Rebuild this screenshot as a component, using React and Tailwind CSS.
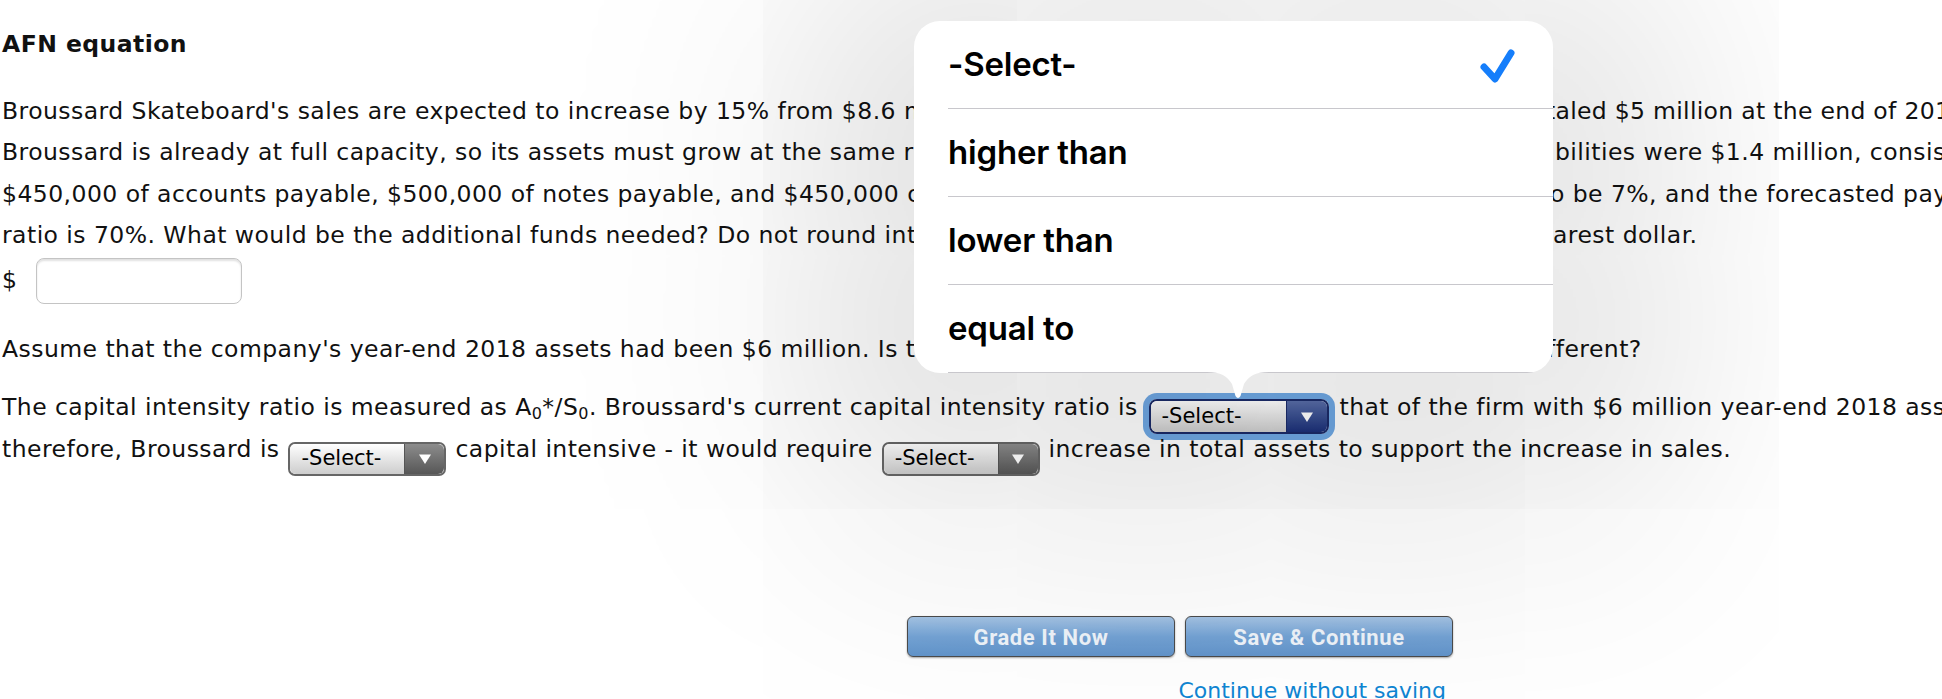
import React from 'react';

// lines of the problem text that run under the open picker and past the window
const problemLines = [
  {
    left: "Broussard Skateboard's sales are expected to increase by 15% from $8.6 million in 2018 to $9.89 million in 2019. Its assets to",
    right: 'taled $5 million at the end of 2018.',
    cell: 'w-[1544px]',
    pad: 'tracking-[0.3px]',
  },
  {
    left: 'Broussard is already at full capacity, so its assets must grow at the same rate as projected sales. At the end of 2018, current lia',
    right: 'bilities were $1.4 million, consisting of',
    cell: 'w-[1551px]',
    pad: 'pl-[2px]',
  },
  {
    left: '$450,000 of accounts payable, $500,000 of notes payable, and $450,000 of accrued liabilities. The after-tax profit margin is forecasted t',
    right: 'o be 7%, and the forecasted payout',
    cell: 'w-[1548px]',
    pad: '',
  },
  {
    left: 'ratio is 70%. What would be the additional funds needed? Do not round intermediate calculations. Round your answer to the ne',
    right: 'arest dollar.',
    cell: 'w-[1551px]',
    pad: '',
  },
];

const options = ['-Select-', 'higher than', 'lower than', 'equal to'];

const Triangle = () => (
  <svg width="14" height="12" viewBox="0 0 14 12">
    <path d="M1 1.5 H13 L7 11 Z" fill="#fff" />
  </svg>
);

// the styled dropdown used inside the sentences
const Picker = ({ focused }) => (
  <span
    className={
      focused
        ? 'mx-[3px] -my-[14px] inline-flex h-[35px] w-[180px] align-[-8px] rounded-[8px] border-2 border-[#1b2b69] tracking-normal ring-[6px] ring-[#6fa8e4]'
        : 'mx-[1px] -my-[14px] inline-flex h-[34px] w-[158px] align-[-8px] rounded-[7px] border-2 border-[#666] tracking-normal'
    }
  >
    <span className="flex flex-1 items-center rounded-l-[6px] bg-linear-to-b from-white to-[#cdcdcd] pl-[11px] text-[21px] leading-none text-black">
      -Select-
    </span>
    <span
      className={
        focused
          ? 'flex w-[41px] items-center justify-center rounded-r-[6px] border-l border-[#1b2b69] bg-linear-to-b from-[#5a6ea9] to-[#1c3079]'
          : 'flex w-[40px] items-center justify-center rounded-r-[6px] border-l border-[#555] bg-linear-to-b from-[#8d8d8d] to-[#575757]'
      }
    >
      <Triangle />
    </span>
  </span>
);

export default function App() {
  return (
    <div className="relative h-[699px] w-[1942px] overflow-hidden bg-white font-['DejaVu_Sans',Verdana,sans-serif] text-[23.5px] leading-[41.5px] tracking-[0.45px] text-[#111]">
      <div className="w-[2356px] pt-[24px] pl-[2px]">
        <h1 className="font-bold">AFN equation</h1>

        <div className="mt-[25px]">
          {problemLines.map((l, i) => (
            <div key={i} className="flex whitespace-nowrap">
              <div className={l.cell + ' shrink-0 overflow-hidden'}>{l.left}</div>
              <div className={l.pad}>{l.right}</div>
            </div>
          ))}
        </div>

        <div className="mt-[1px] flex h-[47px] items-center gap-[19px]">
          <span>$</span>
          <input
            type="text"
            className="h-[46px] w-[206px] rounded-[8px] border border-[#c4c4c4] bg-white shadow-[inset_0_2px_2px_rgba(0,0,0,0.12)] outline-none"
          />
        </div>

        <div className="mt-[24px] flex whitespace-nowrap">
          <div className="w-[1545px] shrink-0 overflow-hidden">
            Assume that the company's year-end 2018 assets had been $6 million. Is the AFN for this firm likely to be di
          </div>
          <div>fferent?</div>
        </div>

        <div className="mt-[16px] whitespace-nowrap leading-[42px]">
          The capital intensity ratio is measured as A<sub className="text-[16px]">0</sub>*/S<sub className="text-[16px]">0</sub>. Broussard's current capital intensity ratio is{' '}
          <Picker focused />{' '}
          that of the firm with $6 million year-end 2018 assets;
          <br />
          therefore, Broussard is{' '}
          <Picker />{' '}
          capital intensive - it would require{' '}
          <Picker />{' '}
          increase in total assets to support the increase in sales.
        </div>

        <div className="mt-[146px] flex w-[2356px] justify-center tracking-normal">
          <div className="flex flex-col items-end">
            <div className="flex gap-[10px]">
              <button className="h-[41px] w-[268px] rounded-[6px] border border-[#4b4b4b] bg-linear-to-b from-[#a4c3e4] via-[#74a3d5] to-[#6294cb] font-['Roboto',sans-serif] text-[22px] font-bold tracking-[0.6px] text-[#eef3f9] shadow-[0_1px_2px_rgba(0,0,0,0.35)]">
                Grade It Now
              </button>
              <button className="h-[41px] w-[268px] rounded-[6px] border border-[#4b4b4b] bg-linear-to-b from-[#a4c3e4] via-[#74a3d5] to-[#6294cb] font-['Roboto',sans-serif] text-[22px] font-bold tracking-[0.6px] text-[#eef3f9] shadow-[0_1px_2px_rgba(0,0,0,0.35)]">
                Save &amp; Continue
              </button>
            </div>
            <a className="mt-[13px] mr-[7px] text-[22px] text-[#0f86d3]">Continue without saving</a>
          </div>
        </div>
      </div>

      {/* open picker popover */}
      <div className="absolute top-[21px] left-[914px] w-[639px] overflow-hidden rounded-[26px] bg-white font-['Inter',sans-serif] tracking-normal text-black shadow-[0_40px_280px_110px_rgba(0,0,0,0.13)]">
        {options.map((o, i) => (
          <div key={o} className="pl-[34px]">
            <div className="flex h-[88px] items-center justify-between border-b border-[#c8c7cc] pr-[38px]">
              <span className="text-[33px] font-semibold tracking-[-0.2px]">{o}</span>
              {i === 0 && (
                <svg width="40" height="36" viewBox="0 0 40 36">
                  <path d="M9 20 L20 32 L36 6" fill="none" stroke="#157efb" strokeWidth="7" strokeLinecap="round" strokeLinejoin="round" />
                </svg>
              )}
            </div>
          </div>
        ))}
      </div>
      <svg className="absolute top-[372px] left-[1207px]" width="62" height="28" viewBox="0 0 62 28">
        <path d="M0 0 C14 0 20 4 25 12 L28.5 24 Q31 28 33.5 24 L37 12 C42 4 48 0 62 0 Z" fill="#fff" />
      </svg>
    </div>
  );
}
